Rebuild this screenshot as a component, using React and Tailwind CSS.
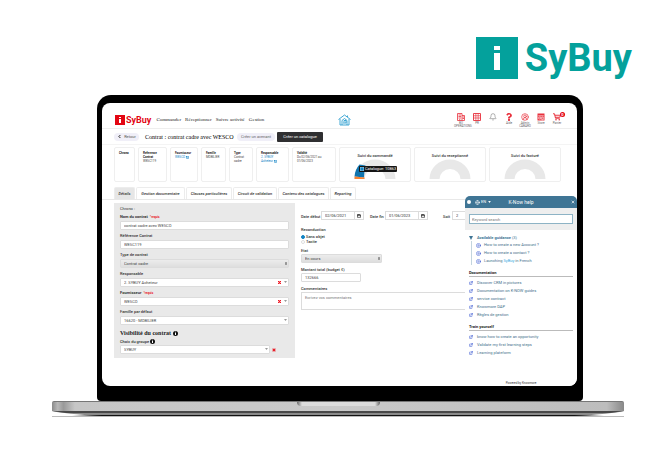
import React from "react";
import {
  Bell, CircleUserRound, Calendar, Globe, ExternalLink, CirclePlay, ChevronLeft, X, Mail,
} from "lucide-react";
import { FaQuestion } from "react-icons/fa";

const inputBase =
  "block w-full h-[9px] rounded-[1px] border border-[#dcdcdc] bg-white px-[3px] text-[4px] leading-none text-[#444] outline-none";

function Brand() {
  return (
    <header className="flex h-[95px] items-start justify-end pr-[33px] pt-[37px]">
      <div className="flex h-[42px] items-center gap-[7px]">
        <svg viewBox="0 0 42 42" className="size-[42px]" role="img" aria-label="i">
          <rect width="42" height="42" fill="#04a19c" />
          <rect x="18" y="9" width="6" height="4" fill="#fff" />
          <rect x="18" y="16" width="6" height="17" fill="#fff" />
        </svg>
        <span className="text-[38px] font-bold leading-none text-[#04a19c]">SyBuy</span>
      </div>
    </header>
  );
}

function OfficeIcon({ className }) {
  return (
    <svg viewBox="0 0 16 16" className={className} fill="none" stroke="currentColor">
      <path d="M1 1h9v14H1zM10 5h5v10h-5" strokeWidth="1.6" />
      <path d="M3 4h5M3 7h5M3 10h5M11 8h3M11 11h3M5.5 12v3" strokeWidth="1.6" />
    </svg>
  );
}

function GridIcon({ className }) {
  return (
    <svg viewBox="0 0 16 16" className={className} fill="none" stroke="currentColor">
      <path d="M1 1h14v14H1z" strokeWidth="1.8" />
      <path d="M5.7 1v14M10.3 1v14M1 5.5h14M1 10h14" strokeWidth="1.3" />
    </svg>
  );
}

function StoreIcon({ className }) {
  return (
    <svg viewBox="0 0 16 16" className={className}>
      <path d="M1 1h14v14H1z" fill="currentColor" />
      <path d="M2.5 5.5h11M3.5 8h4v4h-4zM9.5 8h3v5.500h-3z" fill="none" stroke="#fff" strokeWidth="1.2" />
    </svg>
  );
}

function CartIcon({ className }) {
  return (
    <svg viewBox="0 0 16 16" className={className}>
      <path d="M0 1.500h3l2 9h8.500M3.500 4.500h11.500l-1.500 4H4.500" fill="none" stroke="currentColor" strokeWidth="1.900" />
      <circle cx="6" cy="13.500" r="1.600" fill="currentColor" />
      <circle cx="12.500" cy="13.500" r="1.600" fill="currentColor" />
    </svg>
  );
}

const actions = [
  { label: "BU OPERATIONS", icon: OfficeIcon, red: true },
  { label: "PR", icon: GridIcon, red: true },
  { label: "", icon: Bell, red: false },
  { label: "Aide", icon: FaQuestion, red: true },
  { label: "Admin CABARO", icon: CircleUserRound, red: true },
  { label: "Store", icon: StoreIcon, red: true },
  { label: "Panier", icon: CartIcon, red: true, badge: "0" },
];

function NavBar() {
  return (
    <nav className="flex h-[26px] items-center border-b border-[#eeeeee] pl-[13px] pr-[12px] pt-[8px]">
      <div className="flex items-center gap-px">
        <svg viewBox="0 0 10 10" className="size-[10px]" role="img" aria-label="i">
          <rect width="10" height="10" fill="#e30613" />
          <rect x="4" y="2" width="2" height="1" fill="#fff" />
          <rect x="4" y="4" width="2" height="4" fill="#fff" />
        </svg>
        <span className="text-[9px] font-bold leading-[10px] text-[#e30613]">SyBuy</span>
      </div>
      <div className="ml-[5px] flex gap-[4px] whitespace-nowrap font-['Liberation_Serif',serif] text-[5px] leading-none text-[#222]">
        {["Commander", "Réceptionner", "Suivre activité", "Gestion"].map((t) => (
          <a key={t} href="#">{t}</a>
        ))}
      </div>
      <div className="flex flex-1 justify-center pr-[28px]">
        <a href="#" aria-label="Accueil" className="text-[#2f9fd0]">
          <svg viewBox="0 0 26 24" className="h-[12px] w-[13px]" fill="none" stroke="currentColor" strokeWidth="1.8">
            <path d="M1 11 13 2l12 9M4 10v12h4v-9l5-4 5 4v9h4V10M8 22h10M12 17v-4h4v5h-6" />
            <path d="M19 3v3" />
          </svg>
        </a>
      </div>
      <div className="flex">
        {actions.map(({ label, icon: Icon, red, badge }, i) => (
          <button
            key={i}
            aria-label={label || "Notifications"}
            className={`relative flex h-[14px] w-[16px] flex-col items-center ${red ? "text-[#e8303c]" : "text-[#888]"}`}
          >
            <Icon className="size-[8px] shrink-0" />
            <span className="mt-px w-[14px] text-center text-[3px] leading-[3px] text-[#666]">{label}</span>
            {badge && (
              <span className="absolute right-0 top-[-1px] size-[5px] rounded-full bg-[#e30613] text-center text-[4px] font-bold leading-[5px] text-white">{badge}</span>
            )}
          </button>
        ))}
      </div>
    </nav>
  );
}

function TitleBar() {
  return (
    <div className="flex h-[16px] items-center whitespace-nowrap border-b border-[#f4f4f4] pl-[12px] text-[4px]">
      <button className="flex h-[8px] w-[25px] items-center justify-center gap-[2px] rounded-full bg-[#f0eff8] text-[#555]">
        <ChevronLeft className="size-[5px] text-black" strokeWidth={4} />
        Retour
      </button>
      <h1 className="ml-[6px] w-[91px] font-['Liberation_Serif',serif] text-[6px] leading-none text-black">
        Contrat : contrat cadre avec WESCO
      </h1>
      <button className="ml-px h-[8px] w-[38px] rounded-full bg-[#f0eff8] text-[#666]">Créer un avenant</button>
      <button className="ml-[2px] h-[10px] w-[46px] rounded-[1px] bg-[#2f2f31] text-white">Créer un catalogue</button>
    </div>
  );
}

function Fact({ title, className, link, children }) {
  return (
    <div className={`rounded-[2px] border border-[#efefef] px-[4px] pt-[3px] text-[3px] leading-[4px] ${className}`}>
      <div className="font-bold text-[#222]">{title}</div>
      <div className={link ? "text-[#1383c4]" : "text-[#444]"}>{children}</div>
    </div>
  );
}

function Gauge({ title, tooltip }) {
  return (
    <div className="relative flex flex-1 flex-col items-center rounded-[2px] border border-[#efefef] pt-[5px]">
      <div className="text-[4px] font-medium leading-[5px] text-[#333]">{title}</div>
      <svg viewBox="0 0 42 20" className="mt-px h-[20px] w-[42px]">
        <path d="M0.5 20a20.5 19.500 0 0 1 41 0h-10a10.5 10 0 0 0-21 0z" fill="#e8e8e8" />
        {tooltip && <path d="M0.5 17.500a20.5 20 0 0 1 5-12l6 1-1 5-.5 7z" fill="#0f74ae" />}
        {tooltip && <path d="M0.5 20v-2.500l10 1V20z" fill="#f58233" />}
      </svg>
      {tooltip && (
        <div className="absolute left-[19px] top-[18px] flex h-[6px] items-center gap-px whitespace-nowrap rounded-[1px] bg-[#151515] px-px text-[4px] leading-none text-white">
          <svg viewBox="0 0 4 4" className="size-[4px]">
            <path d="M0 0h4v4H0z" fill="#9cc8e2" />
            <path d="M.5.5h3v3h-3z" fill="#0f84c4" />
          </svg>
          {tooltip}
        </div>
      )}
    </div>
  );
}

function Facts() {
  return (
    <section className="mr-[16px] ml-[12px] mt-[2px] flex h-[35px] gap-[3px]">
      <Fact title="Chrono" className="w-[21px]" />
      <Fact title="Reference Contrat" className="w-[29px]">WESC119</Fact>
      <Fact title="Fournisseur" className="w-[28px]" link>
        WESCO <Mail className="inline size-[3px]" strokeWidth={4} />
      </Fact>
      <Fact title="Famille" className="w-[25px]">MOBILIER</Fact>
      <Fact title="Type" className="w-[24px]">Contrat cadre</Fact>
      <Fact title="Responsable" className="w-[33px]" link>
        2. SYBUY Acheteur <Mail className="inline size-[3px]" strokeWidth={4} />
      </Fact>
      <Fact title="Validité" className="w-[44px]">Du 02/06/2021 au 01/06/2023</Fact>
      <Gauge title="Suivi du commandé" tooltip="Catalogue: 10863" />
      <Gauge title="Suivi du receptionné" />
      <Gauge title="Suivi du facturé" />
    </section>
  );
}

function Tabs() {
  const tabs = [
    ["Détails", "w-[21px] bg-[#e6e6e6]"],
    ["Gestion documentaire", "w-[49px]"],
    ["Clauses particulières", "w-[46px]"],
    ["Circuit de validation", "w-[44px]"],
    ["Contenu des catalogues", "w-[51px]"],
    ["Reporting", "w-[26px]"],
  ];
  return (
    <div role="tablist" className="mt-[5px] flex h-[13px] gap-px border-b border-[#e8e8e8] pl-[12px]">
      {tabs.map(([t, c]) => (
        <button key={t} role="tab" className={`whitespace-nowrap rounded-t-[2px] border border-b-0 border-[#ececec] text-[4px] font-medium italic text-[#333] ${c}`}>
          {t}
        </button>
      ))}
    </div>
  );
}

function Required() {
  return <span className="pt-px text-[3px] font-bold text-[#e8202a]">*requis</span>;
}

function Combo({ id, value, clear, native }) {
  return (
    <div className="relative">
      <select id={id} className={`${inputBase} appearance-none ${native ? "bg-[linear-gradient(#ececec,#dedede)]" : ""}`}>
        <option>{value}</option>
      </select>
      {clear && (
        <svg viewBox="0 0 3 3" className="absolute right-[8px] top-[3px] size-[3px]">
          <path d="M0 0l3 3M3 0L0 3" stroke="#f0101c" strokeWidth="1.2" />
        </svg>
      )}
      {native ? (
        <svg viewBox="0 0 4 6" className="pointer-events-none absolute right-[2px] top-[2px] h-[5px] w-[2px]">
          <path d="M0 2.4 2 0l2 2.4zM0 3.6 2 6l2-2.4z" fill="#333" />
        </svg>
      ) : (
        <svg viewBox="0 0 4 2" className="pointer-events-none absolute right-[2px] top-[3px] h-[2px] w-[3px]">
          <path d="M0 0h4L2 2z" fill="#777" />
        </svg>
      )}
    </div>
  );
}

function Field({ id, label, bold, required, children }) {
  return (
    <div>
      <label htmlFor={id} className={`flex h-[10px] items-center gap-[2px] pt-px text-[4px] leading-none text-[#333] ${bold ? "font-bold" : "font-medium"}`}>
        {label}
        {required && <Required />}
      </label>
      {children}
    </div>
  );
}

function InfoDot() {
  return (
    <svg viewBox="0 0 10 10" className="size-[5px]">
      <circle cx="5" cy="5" r="5" fill="#111" />
      <path d="M4 4.2h2v4H4zM4 1.6h2v1.6H4z" fill="#fff" />
    </svg>
  );
}

function ContractForm() {
  return (
    <form className="h-[155px] w-[181px] shrink-0 bg-[#e9e9e9] px-[6px] pt-[4px]">
      <div className="h-[4px] text-[4px] leading-[4px] text-[#333]">Chrono :</div>
      <Field id="nom" label="Nom du contrat" bold required>
        <input id="nom" defaultValue="contrat cadre avec WESCO" className={inputBase} />
      </Field>
      <Field id="ref" label="Référence Contrat">
        <input id="ref" defaultValue="WESC119" className={inputBase} />
      </Field>
      <Field id="type" label="Type de contrat"><Combo id="type" value="Contrat cadre" native /></Field>
      <Field id="resp" label="Responsable"><Combo id="resp" value="2. SYBUY Acheteur" clear /></Field>
      <Field id="four" label="Fournisseur" bold required><Combo id="four" value="WESCO" clear /></Field>
      <Field id="fam" label="Famille par défaut"><Combo id="fam" value="16620 - MOBILIER" /></Field>
      <h2 className="mt-[4px] flex h-[8px] items-center gap-[2px] whitespace-nowrap font-['Liberation_Serif',serif] text-[6px] font-bold leading-none text-[#222]">
        Visibilité du contrat
        <InfoDot />
      </h2>
      <label htmlFor="groupe" className="mt-px flex h-[7px] items-center gap-px text-[4px] font-medium leading-none text-[#333]">
        Choix du groupe <InfoDot />
      </label>
      <div className="flex items-center gap-[2px]">
        <div className="w-[150px]"><Combo id="groupe" value="SYBUY" /></div>
        <button type="button" aria-label="Supprimer" className="text-[#e8202a]"><X className="size-[4px]" strokeWidth={7} /></button>
      </div>
    </form>
  );
}

function DateBox({ id, label, value, className }) {
  return (
    <div className={`flex items-center ${className}`}>
      <label htmlFor={id} className="pt-[2px]">{label}</label>
      <input id={id} defaultValue={value} className="ml-auto h-[9px] w-[34px] border border-[#dcdcdc] px-[3px] text-[4px] font-normal outline-none" />
      <button type="button" aria-label="Calendrier" className="flex h-[9px] w-[9px] items-center justify-center border border-l-0 border-[#dcdcdc]">
        <Calendar className="size-[4px]" strokeWidth={4} />
      </button>
    </div>
  );
}

function DetailForm() {
  return (
    <form className="min-w-0 flex-1 pl-[6px] pt-[8px] text-[4px] font-medium leading-none text-[#333]">
      <div className="flex h-[9px] items-center whitespace-nowrap">
        <DateBox id="debut" label="Date début" value="02/06/2021" className="w-[63px]" />
        <DateBox id="fin" label="Date fin" value="01/06/2023" className="ml-[6px] w-[58px]" />
        <label htmlFor="soit" className="ml-[15px] w-[9px] pt-[2px]">Soit</label>
        <input id="soit" defaultValue="2" className="h-[9px] w-[30px] border border-[#dcdcdc] px-[3px] text-[4px] font-normal outline-none" />
      </div>
      <fieldset className="mt-[8px]">
        <legend className="h-[6px]">Reconduction</legend>
        <label className="flex h-[5px] items-center gap-px">
          <input type="radio" name="rec" defaultChecked className="size-[4px] appearance-none rounded-full border border-[#ccc] checked:border-[#1383c4] checked:bg-[#1383c4]" />
          Sans objet
        </label>
        <label className="flex h-[5px] items-center gap-px">
          <input type="radio" name="rec" className="size-[4px] appearance-none rounded-full border border-[#ddd] checked:border-[#1383c4] checked:bg-[#1383c4]" />
          Tacite
        </label>
      </fieldset>
      <label htmlFor="etat" className="mt-[5px] block h-[5px]">Etat</label>
      <div className="w-[81px] font-normal"><Combo id="etat" value="En cours" native /></div>
      <label htmlFor="montant" className="mt-[5px] block h-[5px]">Montant total (budget €)</label>
      <div className="w-[60px] font-normal"><input id="montant" defaultValue="132666" className={inputBase} /></div>
      <label htmlFor="com" className="mt-[5px] block h-[5px]">Commentaires</label>
      <textarea id="com" placeholder="Ecrivez vos commentaires" className="block h-[18px] w-full resize-none border border-[#dcdcdc] px-[3px] pt-[2px] font-normal leading-[5px] outline-none placeholder:text-[#777]" />
    </form>
  );
}

function HelpSection({ title, items }) {
  return (
    <section className="mt-[5px]">
      <h3 className="flex h-[7px] items-center border-b border-[#bbb] text-[4px] font-bold leading-none text-[#222]">{title}</h3>
      <ul className="mt-[2px]">
        {items.map((t) => (
          <li key={t} className="flex h-[8px] items-center gap-[4px] text-[4px] leading-none text-[#44708a]">
            <ExternalLink className="size-[4px] text-[#3a58d0]" strokeWidth={3} />
            <a href="#">{t}</a>
          </li>
        ))}
      </ul>
    </section>
  );
}

function HelpPanel() {
  return (
    <aside className="absolute bottom-0 right-0 flex h-[190px] w-[112px] flex-col overflow-hidden rounded-t-[5px] rounded-br-[7px] bg-white">
      <div className="flex h-[12px] shrink-0 items-center bg-[#3f7595] px-[2px] text-[4px] leading-none text-white">
        <span className="size-[4px] rounded-full bg-white" />
        <Globe className="ml-[4px] size-[5px]" />
        <span className="ml-px">EN</span>
        <svg viewBox="0 0 4 3" className="ml-[2px] h-[2px] w-[3px]"><path d="M0 0h4L2 3z" fill="#fff" /></svg>
        <span className="flex-1 pr-[20px] text-center text-[5px]">K-Now help</span>
        <X className="size-[4px]" strokeWidth={4} />
      </div>
      <div className="h-[22px] shrink-0 bg-[#eeeeee] px-[4px] pt-[6px]">
        <input aria-label="Keyword search" placeholder="Keyword search" className="block h-[10px] w-full border border-[#8db3c5] bg-white px-[2px] text-[4px] outline-none placeholder:text-[#777]" />
      </div>
      <div className="px-[4px] pt-[4px]">
        <div className="flex h-[7px] items-center gap-[4px] text-[4px] font-bold leading-none text-[#3f7595]">
          <svg viewBox="0 0 4 4" className="size-[4px]"><path d="M0 0h4L2 4z" fill="#3f7595" /></svg>
          <span>Available guidance <span className="font-normal">(3)</span></span>
        </div>
        <ul className="ml-[2px] border-l border-[#c3d5df] pl-[4px]">
          {["How to create a new Account ?", "How to create a contact ?"].map((t) => (
            <li key={t} className="flex h-[8px] items-center gap-[3px] text-[4px] leading-none text-[#44708a]">
              <CirclePlay className="size-[5px] text-[#3a58d0]" strokeWidth={2.5} />
              <a href="#">{t}</a>
            </li>
          ))}
          <li className="flex h-[8px] items-center gap-[3px] text-[4px] leading-none text-[#44708a]">
            <CirclePlay className="size-[5px] text-[#3a58d0]" strokeWidth={2.5} />
            <a href="#">Launching <span className="text-[#2fa6e0]">SyBuy</span> in French</a>
          </li>
        </ul>
        <HelpSection
          title="Documentation"
          items={["Discover CRM in pictures", "Documentation on K-NOW guides", "service contract", "Knowmore DAP", "Règles de gestion"]}
        />
        <HelpSection
          title="Train yourself"
          items={["know how to create an opportunity", "Validate my first learning steps", "Learning plateform"]}
        />
      </div>
      <div className="mt-auto pb-px text-center text-[3px] leading-[4px] text-[#333]">Powered by Knowmore</div>
    </aside>
  );
}

function Laptop() {
  return (
    <div>
      <div className="ml-[97px] mr-[82px] rounded-t-[14px] rounded-b-[4px] bg-black pb-[15px] pl-[5px] pr-[6px] pt-[8px]">
        <main className="relative h-[283px] overflow-hidden rounded-[8px] bg-white">
          <NavBar />
          <TitleBar />
          <Facts />
          <Tabs />
          <div className="mt-[3px] flex pl-[12px]">
            <ContractForm />
            <DetailForm />
          </div>
          <HelpPanel />
        </main>
      </div>
      <div className="ml-[52px] mr-[41px]">
        <div className="flex h-[10px] justify-center rounded-t-[2px] border-t border-[#777] bg-[linear-gradient(90deg,#8a8a8a,#b8b8b8_1%,#999_2%,#c6c6c6_4%,#c9c9c9_50%,#bdbdbd_97%,#888)]">
          <div className="h-[4px] w-[83px] rounded-b-[4px] bg-[linear-gradient(90deg,#666,#dcdcdc_6%,#dcdcdc_94%,#666)]" />
        </div>
        <svg viewBox="0 0 572 6" preserveAspectRatio="none" className="block h-[6px] w-full">
          <path d="M0 5h572v1H0z" fill="#bbb" />
          <path d="M0 0h572q-12 3-50 5H50Q12 3 0 0z" fill="#8a8a8a" />
          <path d="M0 0h572l-14 2H14z" fill="#484848" />
          <path d="M20 4h532l-30 1H50z" fill="#111" />
        </svg>
      </div>
    </div>
  );
}

export default function App() {
  return (
    <div className="min-h-screen bg-white font-[Roboto,sans-serif]">
      <Brand />
      <Laptop />
    </div>
  );
}
